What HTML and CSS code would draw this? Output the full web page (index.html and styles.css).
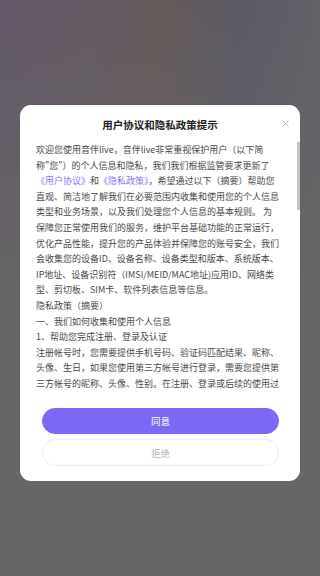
FILE: index.html
```html
<!DOCTYPE html>
<html lang="zh-CN">
<head>
    <meta charset="UTF-8">
    <meta name="viewport" content="width=device-width, initial-scale=1.0">
    <title>用户协议和隐私政策提示</title>
    <link rel="stylesheet" href="styles.css">
</head>
<body>

    <div class="dialog">
        <div class="dialog-header">
            <div class="dialog-title">用户协议和隐私政策提示</div>
            <span class="dialog-close">
                <svg width="7" height="7" viewBox="0 0 7 7"><path d="M0.5 0.5L6.5 6.5M6.5 0.5L0.5 6.5" stroke="#bdbdbd" stroke-width="1"/></svg>
            </span>
        </div>

        <!-- 协议内容 -->
        <div class="dialog-body">
            <p>
                欢迎您使用音伴live，音伴live非常重视保护用户（以下简<br>
                称"您"）的个人信息和隐私，我们我们根据监管要求更新了<br>
                <a class="link">《用户协议》</a>和<a class="link">《隐私政策》</a>，希望通过以下（摘要）帮助您<br>
                直观、简洁地了解我们在必要范围内收集和使用您的个人信息<br>
                类型和业务场景，以及我们处理您个人信息的基本规则。 为<br>
                保障您正常使用我们的服务，维护平台基础功能的正常运行，<br>
                优化产品性能，提升您的产品体验并保障您的账号安全，我们<br>
                会收集您的设备ID、设备名称、设备类型和版本、系统版本、<br>
                IP地址、设备识别符（IMSI/MEID/MAC地址)应用ID、网络类<br>
                型、剪切板、SIM卡、软件列表信息等信息。
            </p>
            <p>隐私政策（摘要）</p>
            <p>一、我们如何收集和使用个人信息</p>
            <p>1、帮助您完成注册、登录及认证</p>
            <p>
                注册帐号时，您需要提供手机号码、验证码匹配结果、昵称、<br>
                头像、生日，如果您使用第三方帐号进行登录，需要您提供第<br>
                三方帐号的昵称、头像、性别。在注册、登录或后续的使用过<br>
                程中，您还可以选择进行实名认证，我们会收集您的真实姓<br>
                名、身份证号码等信息，用于核验您的身份。
            </p>
            <p>2、为您提供直播、语音聊天及互动服务</p>
            <p>
                当您使用语音房间、连麦、私信等功能时，我们会请求您授权<br>
                麦克风、相机、相册权限，用于录制音频、上传头像及发送<br>
                图片。如您拒绝授权，将无法使用对应功能，但不影响您使<br>
                用其他服务。
            </p>
            <p>3、为您提供充值及消费服务</p>
            <p>
                当您在平台内进行充值时，我们会收集您的订单信息、支付方<br>
                式及交易记录，用于完成支付、查询及售后服务。
            </p>
            <p>二、我们如何共享、转让、公开披露您的个人信息</p>
            <p>
                我们不会向第三方出售您的个人信息。仅在获得您的明确同意<br>
                或法律法规要求的情况下，才会与第三方共享必要信息。
            </p>
            <p>三、您的权利</p>
            <p>
                您可以通过"我的-设置"查询、更正、删除您的个人信息，也<br>
                可以注销帐号。如您对本政策有任何疑问，可随时联系我们。
            </p>
            <p>
                请您仔细阅读并充分理解<a class="link">《用户协议》</a>和<a class="link">《隐私政策》</a>，<br>
                如您同意，请点击"同意"开始使用我们的服务。
            </p>
        </div>
        <!-- 滚动条（无头浏览器下原生滚动条不显示） -->
        <span class="scroll-thumb"></span>

        <div class="dialog-actions">
            <button class="btn btn-agree">同意</button>
            <button class="btn btn-refuse">拒绝</button>
        </div>
    </div>

</body>
</html>
```

FILE: styles.css
```css
/* 页面及遮罩 */
html, body {
    margin: 0;
    padding: 0;
}

body {
    font-family: "Noto Sans CJK SC", "Noto Sans", sans-serif;
    width: 320px;
    height: 576px;
    overflow: hidden;
    background:
        linear-gradient(to bottom, rgba(102, 102, 102, 0) 0, #666 330px),
        linear-gradient(to right, #635869 0%, #655a62 35%, #665a5a 50%, #5b5a66 75%, #626168 100%);
    display: flex;
    justify-content: center;
    align-items: flex-start;
}

/* 弹窗 */
.dialog {
    position: relative;
    margin-top: 105px;
    width: 280px;
    background-color: #fff;
    border-radius: 11px;
    display: flex;
    flex-direction: column;
}

.dialog-header {
    position: relative;
    padding: 12px 0 9px;
}

.dialog-title {
    text-align: center;
    font-size: 10.5px;
    line-height: 15px;
    font-weight: bold;
    color: #222;
}

.dialog-close {
    position: absolute;
    right: 11px;
    top: 15px;
    width: 7px;
    height: 7px;
    display: block;
}

.dialog-close svg {
    display: block;
}

/* 协议内容 */
.dialog-body {
    height: 250px;
    overflow-y: auto;
    padding: 1px 0 0 16px;
    font-size: 9px;
    line-height: 15.6px;
    color: #4a4a4a;
}

.dialog-body p {
    margin: 0;
    white-space: nowrap;
}

.dialog-body::-webkit-scrollbar {
    width: 0;
}

.scroll-thumb {
    position: absolute;
    right: 0;
    top: 37px;
    width: 3px;
    height: 68px;
    background-color: #c4c4c4;
}

.link {
    color: #8878f2;
    text-decoration: none;
}

/* 按钮 */
.dialog-actions {
    display: flex;
    flex-direction: column;
    gap: 5px;
    padding: 16px 21px 15px 22px;
}

.btn {
    font-family: "Noto Sans CJK SC", "Noto Sans", sans-serif;
    height: 26px;
    border-radius: 13px;
    font-size: 9.5px;
    border: 1px solid transparent;
    padding: 0;
}

.btn-agree {
    background-color: #7b68f4;
    border-color: #7b68f4;
    color: #fff;
}

.btn-refuse {
    height: 27px;
    background-color: #fff;
    border-color: #ececec;
    color: #b8b8b8;
}
```
